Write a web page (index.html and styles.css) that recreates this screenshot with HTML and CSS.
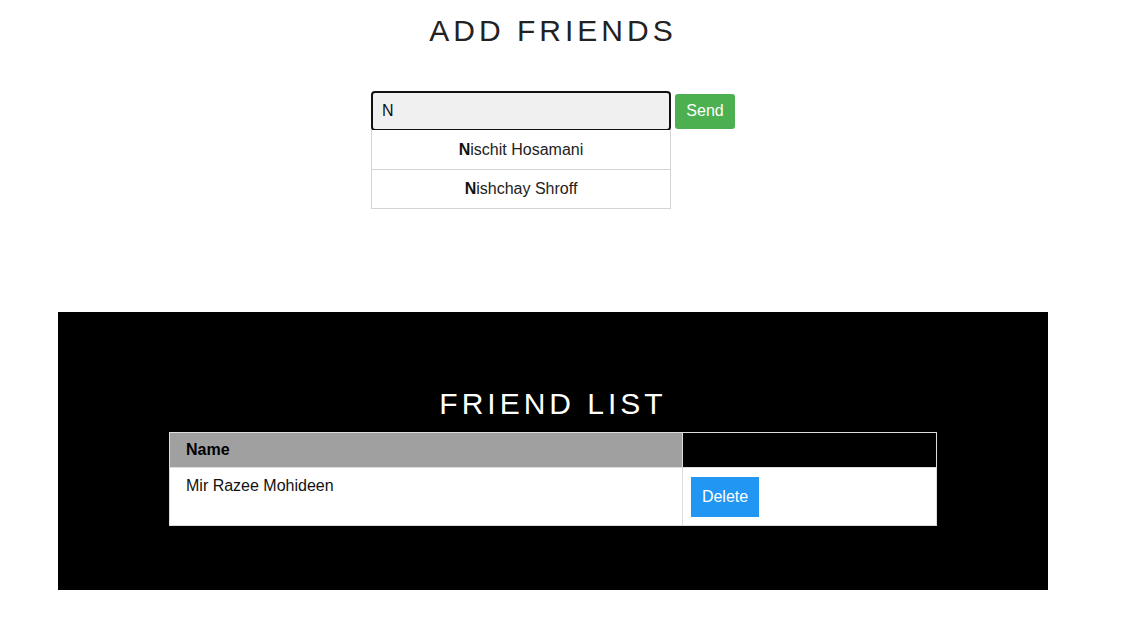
FILE: index.html
```html
<!DOCTYPE html>
<html>
<head>
<meta charset="utf-8">
<title>Friends</title>
<link rel="stylesheet" href="styles.css">
</head>
<body>
<div class="page">
  <section class="add">
    <h1 class="title">ADD FRIENDS</h1>
    <form class="form">
      <div class="field">
        <input class="input" type="text" value="N">
        <div class="suggest">
          <div class="item"><strong>N</strong>ischit Hosamani</div>
          <div class="item"><strong>N</strong>ishchay Shroff</div>
        </div>
      </div>
      <button class="send" type="button">Send</button>
    </form>
  </section>
  <section class="list">
    <h1 class="title light">FRIEND LIST</h1>
    <table class="table">
      <thead>
        <tr><th class="name-col">Name</th><th class="act-col"></th></tr>
      </thead>
      <tbody>
        <tr><td class="name-cell">Mir Razee Mohideen</td><td class="act-cell"><button class="delete" type="button">Delete</button></td></tr>
      </tbody>
    </table>
  </section>
</div>
</body>
</html>
```
FILE: styles.css
```css
html, body {
  margin: 0;
  padding: 0;
  background: #fff;
}
body {
  font-family: "Liberation Sans", Arial, sans-serif;
  font-size: 16px;
  color: #111;
}
.page {
  width: 990px;
  margin-left: 58px;
}
.title {
  margin: 0;
  font-size: 30px;
  line-height: 35px;
  font-weight: normal;
  letter-spacing: 4px;
  color: #222;
  text-align: center;
}
.add {
  padding-top: 13px;
  height: 312px;
  box-sizing: border-box;
}
.form {
  margin: 43px 0 0;
  display: flex;
  justify-content: center;
  align-items: center;
  gap: 4px;
}
.field {
  position: relative;
  width: 300px;
}
.input {
  display: block;
  width: 300px;
  height: 40px;
  box-sizing: border-box;
  border: 2px solid #111;
  border-radius: 4px;
  background: #f0f0f0;
  padding: 0 9px;
  font-family: inherit;
  font-size: 16px;
  color: #111;
  outline: none;
}
.suggest {
  position: absolute;
  left: 0;
  top: 39px;
  width: 300px;
  box-sizing: border-box;
  border: 1px solid #d4d4d4;
  border-top: none;
  background: #fff;
}
.item {
  padding: 10px;
  line-height: 18px;
  text-align: center;
  color: #222;
  border-bottom: 1px solid #d4d4d4;
}
.item:first-child {
  padding-top: 11px;
}
.item:last-child {
  border-bottom: none;
}
.item strong {
  color: #111;
}
.send {
  width: 60px;
  height: 35px;
  border: none;
  border-radius: 3px;
  background: #4caf50;
  color: #fff;
  font-family: inherit;
  font-size: 16px;
  padding: 0;
}
.list {
  background: #000;
  padding: 74px 0 64px;
}
.title.light {
  color: #fff;
  margin-bottom: 11px;
}
.table {
  margin: 0 auto;
  width: 768px;
  border-collapse: collapse;
  table-layout: fixed;
}
.table th, .table td {
  border: 1px solid #ddd;
  text-align: left;
}
.name-col {
  width: 480px;
  padding: 8px 16px;
  background: #a0a0a0;
  color: #000;
  font-weight: bold;
  line-height: 18px;
}
.act-col {
  padding: 8px;
  background: #000;
}
tbody tr {
  background: #fff;
}
.name-cell {
  padding: 9px 16px 8px;
  vertical-align: top;
  line-height: 18px;
  color: #111;
}
.act-cell {
  padding: 9px 8px 8px;
}
.delete {
  display: block;
  width: 68px;
  height: 40px;
  border: none;
  background: #2196f3;
  color: #fff;
  font-family: inherit;
  font-size: 16px;
  padding: 0;
}
```
